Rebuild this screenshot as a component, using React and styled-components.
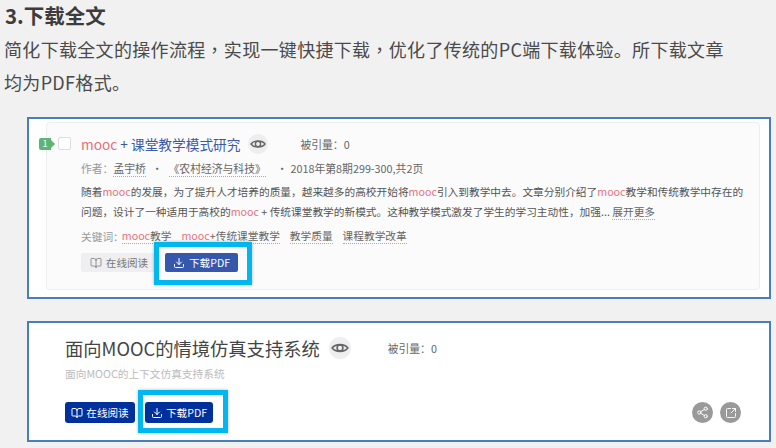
import React from "react";
import styled, { createGlobalStyle } from "styled-components";
import { BookOpen, Download, Share2, SquareArrowOutUpRight } from "lucide-react";

const GlobalStyle = createGlobalStyle`
  html, body {
    margin: 0;
    background: #f1f1f1;
    overflow: hidden;
  }
  body {
    font-family: "Noto Sans CJK SC", "Noto Sans", sans-serif;
  }
`;

function EyeIcon({ size }) {
  return (
    <svg width={size} height={size} viewBox="0 0 16 16" fill="none" stroke="currentColor" strokeWidth="1.4">
      <path d="M1 8C3.8 4 12.2 4 15 8C12.2 12 3.8 12 1 8Z" />
      <circle cx="8" cy="8" r="2.6" />
    </svg>
  );
}

function App() {
  return (
    <Page>
      <GlobalStyle />
      <Heading>3.下载全文</Heading>
      <Intro>
        简化下载全文的操作流程<Comma>，</Comma>实现一键快捷下载<Comma>，</Comma>优化了传统的PC端下载体验。所下载文章
        <br />
        均为PDF格式。
      </Intro>

      <ShotOne>
        <ResultCard>
          <Marker>1</Marker>
          <CheckBox />
          <ResultBody>
            <TitleRow>
              <ResultTitle>
                <Hit>mooc</Hit> + 课堂教学模式研究
              </ResultTitle>
              <EyeBadge>
                <EyeIcon size={16} />
              </EyeBadge>
              <Cited>被引量：0</Cited>
            </TitleRow>
            <MetaRow>
              <MetaLabel>作者：</MetaLabel>
              <DottedLink>孟宇桥</DottedLink>
              <Dot>•</Dot>
              <DottedLink>《农村经济与科技》</DottedLink>
              <Dot $wide>•</Dot>
              <span>2018年第8期299-300,共2页</span>
            </MetaRow>
            <Abstract>
              随着<Hit>mooc</Hit>的发展，为了提升人才培养的质量，越来越多的高校开始将<Hit>mooc</Hit>引入到教学中去。文章分别介绍了<Hit>mooc</Hit>教学和传统教学中存在的
              <br />
              问题，设计了一种适用于高校的<Hit>mooc</Hit> + 传统课堂教学的新模式。这种教学模式激发了学生的学习主动性，加强... <DottedLink>展开更多</DottedLink>
            </Abstract>
            <KeywordRow>
              <KeywordLabel>关键词：</KeywordLabel>
              <Keyword><Hit>mooc</Hit>教学</Keyword>
              <Keyword><Hit>mooc</Hit>+传统课堂教学</Keyword>
              <Keyword>教学质量</Keyword>
              <Keyword>课程教学改革</Keyword>
            </KeywordRow>
            <ButtonRow>
              <ReadButton>
                <BookOpen size={12} strokeWidth={1.5} />
                在线阅读
              </ReadButton>
              <DownloadButton>
                <Download size={12} strokeWidth={2} />
                下载PDF
              </DownloadButton>
            </ButtonRow>
          </ResultBody>
        </ResultCard>
      </ShotOne>

      <ShotTwo>
        <DetailTitleRow>
          <DetailTitle>面向MOOC的情境仿真支持系统</DetailTitle>
          <EyeBadge $large>
            <EyeIcon size={18} />
          </EyeBadge>
          <DetailCited>被引量：0</DetailCited>
        </DetailTitleRow>
        <Subtitle>面向MOOC的上下文仿真支持系统</Subtitle>
        <DetailFooter>
          <DarkButton>
            <BookOpen size={12} strokeWidth={2} />
            在线阅读
          </DarkButton>
          <DarkDownload>
            <Download size={12} strokeWidth={2} />
            下载PDF
          </DarkDownload>
          <RoundIcons>
            <RoundIcon>
              <Share2 size={13} strokeWidth={1.8} />
            </RoundIcon>
            <RoundIcon>
              <SquareArrowOutUpRight size={12} strokeWidth={1.8} />
            </RoundIcon>
          </RoundIcons>
        </DetailFooter>
      </ShotTwo>
    </Page>
  );
}

export default App;

const Page = styled.div`
  width: 776px;
  height: 448px;
  overflow: hidden;
  color: #444;
`;

const Heading = styled.h2`
  margin: 0;
  padding: 1px 0 0 5px;
  height: 28px;
  font-size: 20.5px;
  line-height: 28px;
  font-weight: 700;
  color: #3c3c3c;
`;

const Intro = styled.p`
  margin: 4px 0 0 4px;
  font-size: 18px;
  line-height: 33px;
  letter-spacing: 0.32px;
  color: #4a4a4a;
`;

const Comma = styled.span`
  font-family: "Noto Sans CJK TC", sans-serif;
`;

const Shot = styled.section`
  box-sizing: border-box;
  width: 744px;
  margin-left: 27px;
  background: #fff;
  border: 2px solid #4a7ebb;
`;

const ShotOne = styled(Shot)`
  height: 182px;
  margin-top: 18px;
  padding: 3px 9px 7px 17px;
`;

const ResultCard = styled.div`
  position: relative;
  box-sizing: border-box;
  display: flex;
  height: 100%;
  padding: 14px 0 0 11px;
  background: #fbfbfb;
  border: 1px solid #eee;
  border-radius: 4px;
`;

const Marker = styled.span`
  position: absolute;
  left: -8px;
  top: 15px;
  width: 12px;
  height: 12px;
  background: #5cb572;
  border-radius: 2px 0 0 2px;
  color: #fff;
  font-size: 9px;
  line-height: 12px;
  text-align: center;

  &::after {
    content: "";
    position: absolute;
    left: 12px;
    top: 2px;
    border: 4px solid transparent;
    border-left-color: #5cb572;
    border-right: 0;
  }
`;

const CheckBox = styled.span`
  flex: none;
  box-sizing: border-box;
  width: 13px;
  height: 13px;
  background: #fff;
  border: 1px solid #ddd;
  border-radius: 2px;
`;

const ResultBody = styled.div`
  margin: -3px 0 0 10px;
  min-width: 0;
`;

const TitleRow = styled.div`
  display: flex;
  align-items: center;
  height: 20px;
`;

const ResultTitle = styled.span`
  font-size: 13.7px;
  color: #3b5aa6;
  white-space: nowrap;
`;

const Hit = styled.span`
  color: #e4707f;
`;

const EyeBadge = styled.span`
  display: flex;
  align-items: center;
  justify-content: center;
  width: ${(p) => (p.$large ? "22px" : "20px")};
  height: ${(p) => (p.$large ? "22px" : "20px")};
  margin-left: ${(p) => (p.$large ? "9px" : "8px")};
  background: #eeeef1;
  border-radius: 50%;
  color: #666;
`;

const Cited = styled.span`
  margin-left: 32px;
  font-size: 10.8px;
  color: #666;
`;

const MetaRow = styled.div`
  display: flex;
  align-items: center;
  height: 20px;
  margin-top: 4px;
  font-size: 10.8px;
  color: #666;
  white-space: nowrap;
`;

const MetaLabel = styled.span`
  color: #999;
`;

const DottedLink = styled.span`
  color: #666;
  border-bottom: 1px dotted #aaa;
`;

const Dot = styled.span`
  margin: 0 ${(p) => (p.$wide ? "3px" : "6px")} 0 ${(p) => (p.$wide ? "11px" : "6px")};
`;

const Abstract = styled.p`
  margin: 4px 0 0;
  font-size: 10.7px;
  line-height: 20px;
  color: #555;
  white-space: nowrap;
`;

const KeywordRow = styled.div`
  display: flex;
  align-items: center;
  height: 20px;
  margin-top: 4px;
  font-size: 10.7px;
  white-space: nowrap;
`;

const KeywordLabel = styled(MetaLabel)`
  margin-right: -2px;
`;

const Keyword = styled(DottedLink)`
  margin-right: 10px;
`;

const ButtonRow = styled.div`
  display: flex;
  gap: 8px;
  margin-top: 7px;
`;

const Button = styled.span`
  box-sizing: border-box;
  display: flex;
  align-items: center;
  justify-content: center;
  gap: 4px;
  height: 19px;
  border-radius: 2px;
  font-size: 10.6px;
  white-space: nowrap;
`;

const ReadButton = styled(Button)`
  width: 76px;
  background: #efeff1;
  color: #777;
`;

const Highlight = `
  position: relative;

  &::after {
    content: "";
    position: absolute;
    box-sizing: border-box;
    border: 5px solid #00b7ef;
    box-shadow: 0 0 3px rgba(0, 0, 0, 0.3);
  }
`;

const DownloadButton = styled(Button)`
  ${Highlight}
  width: 73px;
  background: #3558ad;
  color: #fff;

  &::after {
    inset: -11px -14px -13px -11px;
  }
`;

const ShotTwo = styled(Shot)`
  height: 121px;
  margin-top: 22px;
  padding: 13px 28px 0 36px;
`;

const DetailTitleRow = styled.div`
  display: flex;
  align-items: center;
  height: 24px;
`;

const DetailTitle = styled.span`
  font-size: 18.3px;
  color: #444;
  white-space: nowrap;
`;

const DetailCited = styled(Cited)`
  margin-left: 37px;
`;

const Subtitle = styled.div`
  margin-top: 6px;
  font-size: 10.7px;
  line-height: 16px;
  color: #bbb;
`;

const DetailFooter = styled.div`
  display: flex;
  align-items: center;
  gap: 10px;
  margin-top: 20px;
`;

const DarkButton = styled(Button)`
  width: 70px;
  height: 21px;
  gap: 3px;
  background: #00309c;
  color: #fff;
  border-radius: 3px;
`;

const DarkDownload = styled(DarkButton)`
  ${Highlight}
  width: 68px;

  &::after {
    inset: -12px -15px -10px -7px;
  }
`;

const RoundIcons = styled.div`
  display: flex;
  gap: 7px;
  margin-left: auto;
`;

const RoundIcon = styled.span`
  display: flex;
  align-items: center;
  justify-content: center;
  width: 21px;
  height: 21px;
  background: #999;
  border-radius: 50%;
  color: #fff;
`;
